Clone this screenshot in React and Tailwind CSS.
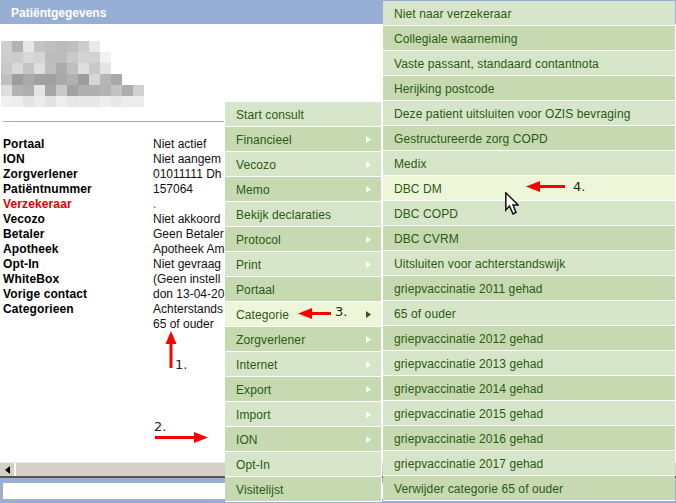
import React from 'react';

const blur = [
  ['#cfcfcf', '#b3b3b3', '#e6e6e6', '#c4c4c4', '#bfbfbf', '#bbbbbb', '#bfbfbf', '#cdcdcd', '#e8e8e8'],
  ['#cdcdcd', '#cbcbcb', '#d8d8d8', '#d4d4d4', '#bcbcbc', '#bcbcbc', '#cacaca', '#d4d4d4', '#d2d2d2', '#f1f1f1'],
  ['#c8c8c8', '#d9d9d9', '#c4c4c4', '#dedede', '#bdbdbd', '#ababab', '#bebebe', '#dedede', '#c8c8c8', '#e4e4e4'],
  ['#bfbfbf', '#9e9e9e', '#ababab', '#a0a0a0', '#a0a0a0', '#a9a9a9', '#b0b0b0', '#9c9c9c', '#d6d6d6', '#b6b6b6', '#a8a8a8'],
  ['#dedede', '#b3b3b3', '#aeaeae', '#e4e4e4', '#a6a6a6', '#c9c9c9', '#a2a2a2', '#afafaf', '#afafaf', '#b4b4b4', '#c2c2c2', '#adadad', '#d0d0d0'],
  ['#f0f0f0', '#eeeeee', '#e4e4e4', '#ececec', '#e2e2e2', '#eeeeee', '#e6e6e6', '#e8e8e8', '#e8e8e8', '#eeeeee', '#e8e8e8', '#ececec', '#ececec'],
];

// values are cut off by the open menu in the screenshot, only the visible part is known
const details = [
  ['Portaal', 'Niet actief'],
  ['ION', 'Niet aangem'],
  ['Zorgverlener', '01011111 Dh'],
  ['Patiëntnummer', '157064'],
  ['Verzekeraar', '.'],
  ['Vecozo', 'Niet akkoord'],
  ['Betaler', 'Geen Betaler'],
  ['Apotheek', 'Apotheek Am'],
  ['Opt-In', 'Niet gevraag'],
  ['WhiteBox', '(Geen instell'],
  ['Vorige contact', 'don 13-04-20'],
  ['Categorieen', 'Achterstands'],
  ['', '65 of ouder'],
];

const mainMenu = [
  { label: 'Start consult' },
  { label: 'Financieel', sub: true },
  { label: 'Vecozo', sub: true },
  { label: 'Memo', sub: true },
  { label: 'Bekijk declaraties' },
  { label: 'Protocol', sub: true },
  { label: 'Print', sub: true },
  { label: 'Portaal' },
  { label: 'Categorie', sub: true, active: true },
  { label: 'Zorgverlener', sub: true },
  { label: 'Internet', sub: true },
  { label: 'Export', sub: true },
  { label: 'Import', sub: true },
  { label: 'ION', sub: true },
  { label: 'Opt-In' },
  { label: 'Visitelijst' },
];

const subMenu = [
  'Niet naar verzekeraar',
  'Collegiale waarneming',
  'Vaste passant, standaard contantnota',
  'Herijking postcode',
  'Deze patient uitsluiten voor OZIS bevraging',
  'Gestructureerde zorg COPD',
  'Medix',
  'DBC DM',
  'DBC COPD',
  'DBC CVRM',
  'Uitsluiten voor achterstandswijk',
  'griepvaccinatie 2011 gehad',
  '65 of ouder',
  'griepvaccinatie 2012 gehad',
  'griepvaccinatie 2013 gehad',
  'griepvaccinatie 2014 gehad',
  'griepvaccinatie 2015 gehad',
  'griepvaccinatie 2016 gehad',
  'griepvaccinatie 2017 gehad',
  'Verwijder categorie 65 of ouder',
];

const MenuRow = ({ label, sub, active, dark }) => (
  <div
    className={`flex items-center justify-between h-[25px] pl-[11px] pt-px border-b border-white tracking-[0.1px] text-[#2b5a14] bg-[length:2px_2px] ${
      active
        ? 'bg-[#eef6d9]'
        : dark
          ? 'bg-[repeating-conic-gradient(#c3d6ac_0_25%,#cadcb5_0_50%)]'
          : 'bg-[repeating-conic-gradient(#d4e3c5_0_25%,#d9e7cc_0_50%)]'
    }`}
  >
    <span className="whitespace-nowrap">{label}</span>
    {sub && (
      <svg width="5" height="7" viewBox="0 0 5 7" className="mr-[10px]">
        <path d="M0 0 L5 3.5 L0 7 Z" fill={active ? '#2b5a14' : '#ffffff'} />
      </svg>
    )}
  </div>
);

const UpArrow = () => (
  <svg width="12" height="37" viewBox="0 0 12 37" className="absolute left-[165px] top-[331px]">
    <path d="M4.5 37 V13 H0.5 L6 0 L11.5 13 H7.5 V37 Z" fill="#ff0000" />
  </svg>
);

const SideArrow = ({ left, top, width, dir }) => (
  <svg
    width={width}
    height="11"
    viewBox={`0 0 ${width} 11`}
    className="absolute"
    style={{ left, top, transform: dir === 'left' ? 'scaleX(-1)' : undefined }}
  >
    <path d={`M0 4 H${width - 14} L${width - 14} 0 L${width} 5.5 L${width - 14} 11 V7 H0 Z`} fill="#ff0000" />
  </svg>
);

const Note = ({ children, className }) => (
  <span className={`absolute text-[13px] leading-[15px] text-[#222] font-['DejaVu_Sans',sans-serif] ${className}`}>
    {children}
  </span>
);

export default function App() {
  return (
    <div className="relative w-[676px] h-[503px] overflow-hidden bg-white flex flex-col font-['Liberation_Sans',Arial,sans-serif] text-[12px]">
      <div className="h-[24px] shrink-0 bg-[repeating-conic-gradient(#94abd2_0_25%,#9cb1d6_0_50%)] bg-[length:2px_2px] pl-[11px] pt-[2px] flex items-center font-bold text-white">
        Patiëntgegevens
      </div>

      <div className="flex-1 min-h-0 flex flex-col">
        <div className="mt-[17px] ml-[1px] h-[66px] flex flex-col">
          {blur.map((row, i) => (
            <div key={i} className="flex h-[11px]">
              {row.map((c, j) => (
                <div key={j} className="w-[11px] h-[11px]" style={{ backgroundColor: c }} />
              ))}
            </div>
          ))}
        </div>
        <div className="mt-[14px] ml-[3px] w-[221px] h-px bg-[#98aed4]" />

        <div className="mt-[15px] pl-[3px] leading-[15px] text-[#111]">
          {details.map(([k, v], i) => (
            <div key={i} className="flex h-[15px]">
              <span className={`w-[150px] font-bold tracking-[0.12px] ${k === 'Verzekeraar' ? 'text-[#e00000]' : 'text-black'}`}>{k}</span>
              <span className={`whitespace-nowrap ${k === 'Verzekeraar' ? 'text-[#e00000]' : ''}`}>{v}</span>
            </div>
          ))}
        </div>

        <div className="mt-auto h-[16px] flex items-stretch bg-[#d4d0c8] border-t border-[#efeee9] border-b-[2px] border-b-[#555]">
          <div className="ml-[1px] w-[15px] flex items-center justify-center border-r-2 border-white">
            <svg width="5" height="8" viewBox="0 0 5 8">
              <path d="M5 0 L0 4 L5 8 Z" fill="#000" />
            </svg>
          </div>
        </div>
        <div className="h-[25px] bg-[#98aed4] px-[3px] pt-[5px]">
          <div className="h-[16px] bg-white" />
        </div>
      </div>

      <div className="absolute left-[225px] top-[102px] w-[157px] border-r border-white">
        {mainMenu.map((m, i) => (
          <MenuRow key={m.label} {...m} dark={i % 2 === 1} />
        ))}
      </div>

      <div className="absolute left-[383px] top-[1px] w-[292px]">
        {subMenu.map((label, i) => (
          <MenuRow key={label} label={label} active={label === 'DBC DM'} dark={i % 2 === 1} />
        ))}
      </div>

      <UpArrow />
      <Note className="left-[175px] top-[357px]">1.</Note>
      <Note className="left-[154px] top-[419px]">2.</Note>
      <SideArrow left={155} top={432} width={53} />
      <SideArrow left={298} top={308} width={33} dir="left" />
      <Note className="left-[335px] top-[304px]">3.</Note>
      <SideArrow left={526} top={181} width={39} dir="left" />
      <Note className="left-[573px] top-[179px]">4.</Note>

      <svg width="14" height="24" viewBox="0 0 14 24" className="absolute left-[505px] top-[192px]">
        <path d="M0.8 0.8 V18 L4.5 14 L8 22 L11 20.5 L8 13 H13.2 Z" fill="#fff" stroke="#111" strokeWidth="1.5" />
      </svg>
    </div>
  );
}
